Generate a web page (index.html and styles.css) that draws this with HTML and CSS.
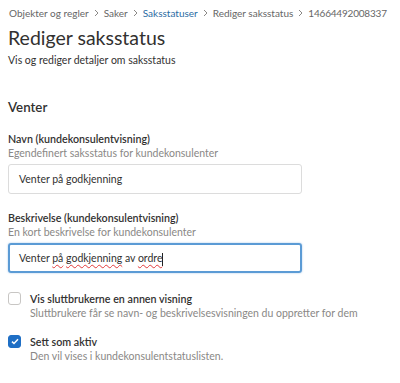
FILE: index.html
```html
<!DOCTYPE html>
<html lang="nb">
<head>
  <meta charset="UTF-8"/>
  <title>Rediger saksstatus</title>
  <link rel="stylesheet" href="styles.css">
</head>
<body>

<nav class="crumbs">
  <span>Objekter og regler</span><svg class="sep" width="5" height="8" viewBox="0 0 5 8"><path d="M1 1 L4 4 L1 7" fill="none" stroke="#8a8886" stroke-width="1"/></svg>
  <span>Saker</span><svg class="sep" width="5" height="8" viewBox="0 0 5 8"><path d="M1 1 L4 4 L1 7" fill="none" stroke="#8a8886" stroke-width="1"/></svg>
  <a href="#">Saksstatuser</a><svg class="sep" width="5" height="8" viewBox="0 0 5 8"><path d="M1 1 L4 4 L1 7" fill="none" stroke="#8a8886" stroke-width="1"/></svg>
  <span>Rediger saksstatus</span><svg class="sep" width="5" height="8" viewBox="0 0 5 8"><path d="M1 1 L4 4 L1 7" fill="none" stroke="#8a8886" stroke-width="1"/></svg>
  <span class="id">14664492008337</span>
</nav>

<h1>Rediger saksstatus</h1>
<p class="sub">Vis og rediger detaljer om saksstatus</p>

<h3>Venter</h3>

<div class="field">
  <div class="label">Navn (kundekonsulentvisning)</div>
  <div class="help">Egendefinert saksstatus for kundekonsulenter</div>
  <div class="input">Venter på godkjenning</div>
</div>

<div class="field">
  <div class="label">Beskrivelse (kundekonsulentvisning)</div>
  <div class="help">En kort beskrivelse for kundekonsulenter</div>
  <div class="input focused">Venter <span class="typo">på</span> <span class="typo">godkjenning</span> av <span class="typo">ordre</span><span class="caret"></span></div>
</div>

<div class="check">
  <span class="box"></span>
  <div>
    <div class="label">Vis sluttbrukerne en annen visning</div>
    <div class="help">Sluttbrukere får se navn- og beskrivelsesvisningen du oppretter for dem</div>
  </div>
</div>

<div class="check">
  <span class="box on">
    <svg width="8" height="7" viewBox="0 0 8 7"><path d="M1 3.6 L3 5.5 L7 1.3" fill="none" stroke="#fff" stroke-width="1.5"/></svg>
  </span>
  <div>
    <div class="label">Sett som aktiv</div>
    <div class="help">Den vil vises i kundekonsulentstatuslisten.</div>
  </div>
</div>

</body>
</html>
```

FILE: styles.css
```css
* { box-sizing: border-box; }
body {
  font-family: Lato, 'Noto Sans', sans-serif;
  margin: 0; padding: 0 8px; color: #323130; background: #fff;
  font-size: 10.5px;
}
.crumbs {
  display: flex; align-items: center; gap: 5px; white-space: nowrap;
  color: #666; font-size: 10px; padding-top: 5px; line-height: 16px; padding-left: 1px;
}
.crumbs a { color: #2b6ca3; text-decoration: none; }
.crumbs .sep { flex: none; }
.crumbs .id { letter-spacing: -0.2px; }
h1 {
  font-size: 19.5px; font-weight: 400; margin: 4px 0 0; line-height: 26px;
}
.sub { margin: 1px 0 0; line-height: 16px; }
h3 {
  font-size: 13.3px; font-weight: 600; margin: 29px 0 0; line-height: 20px;
}
.field { margin-top: 14px; }
.field + .field { margin-top: 16px; }
.label { font-size: 10.7px; font-weight: 600; line-height: 15px; }
.help { color: #8a8886; line-height: 15px; }
.input {
  width: 294px; height: 30px; margin-top: 3px;
  border: 1px solid #dcdcdc; border-radius: 3px;
  padding: 0 10px; line-height: 28px; white-space: nowrap;
}
.input.focused {
  border: 2px solid #5b9bd5; padding: 0 9px; line-height: 26px;
  box-shadow: 0 0 2px rgba(91,155,213,0.6);
}
.typo { text-decoration: underline wavy #e23b3b; text-decoration-thickness: 1px; text-underline-offset: 2px; }
.caret {
  display: inline-block; width: 1px; height: 13px; background: #222;
  vertical-align: middle;
}
.check { display: flex; gap: 9px; margin-top: 18px; }
.check + .check { margin-top: 13px; }
.box {
  flex: none; width: 13px; height: 13px; margin-top: 1px;
  border: 1px solid #c8c6c4; border-radius: 3px;
  display: flex; align-items: center; justify-content: center;
}
.box.on { background: #1f6fc5; border-color: #1f6fc5; }
```
